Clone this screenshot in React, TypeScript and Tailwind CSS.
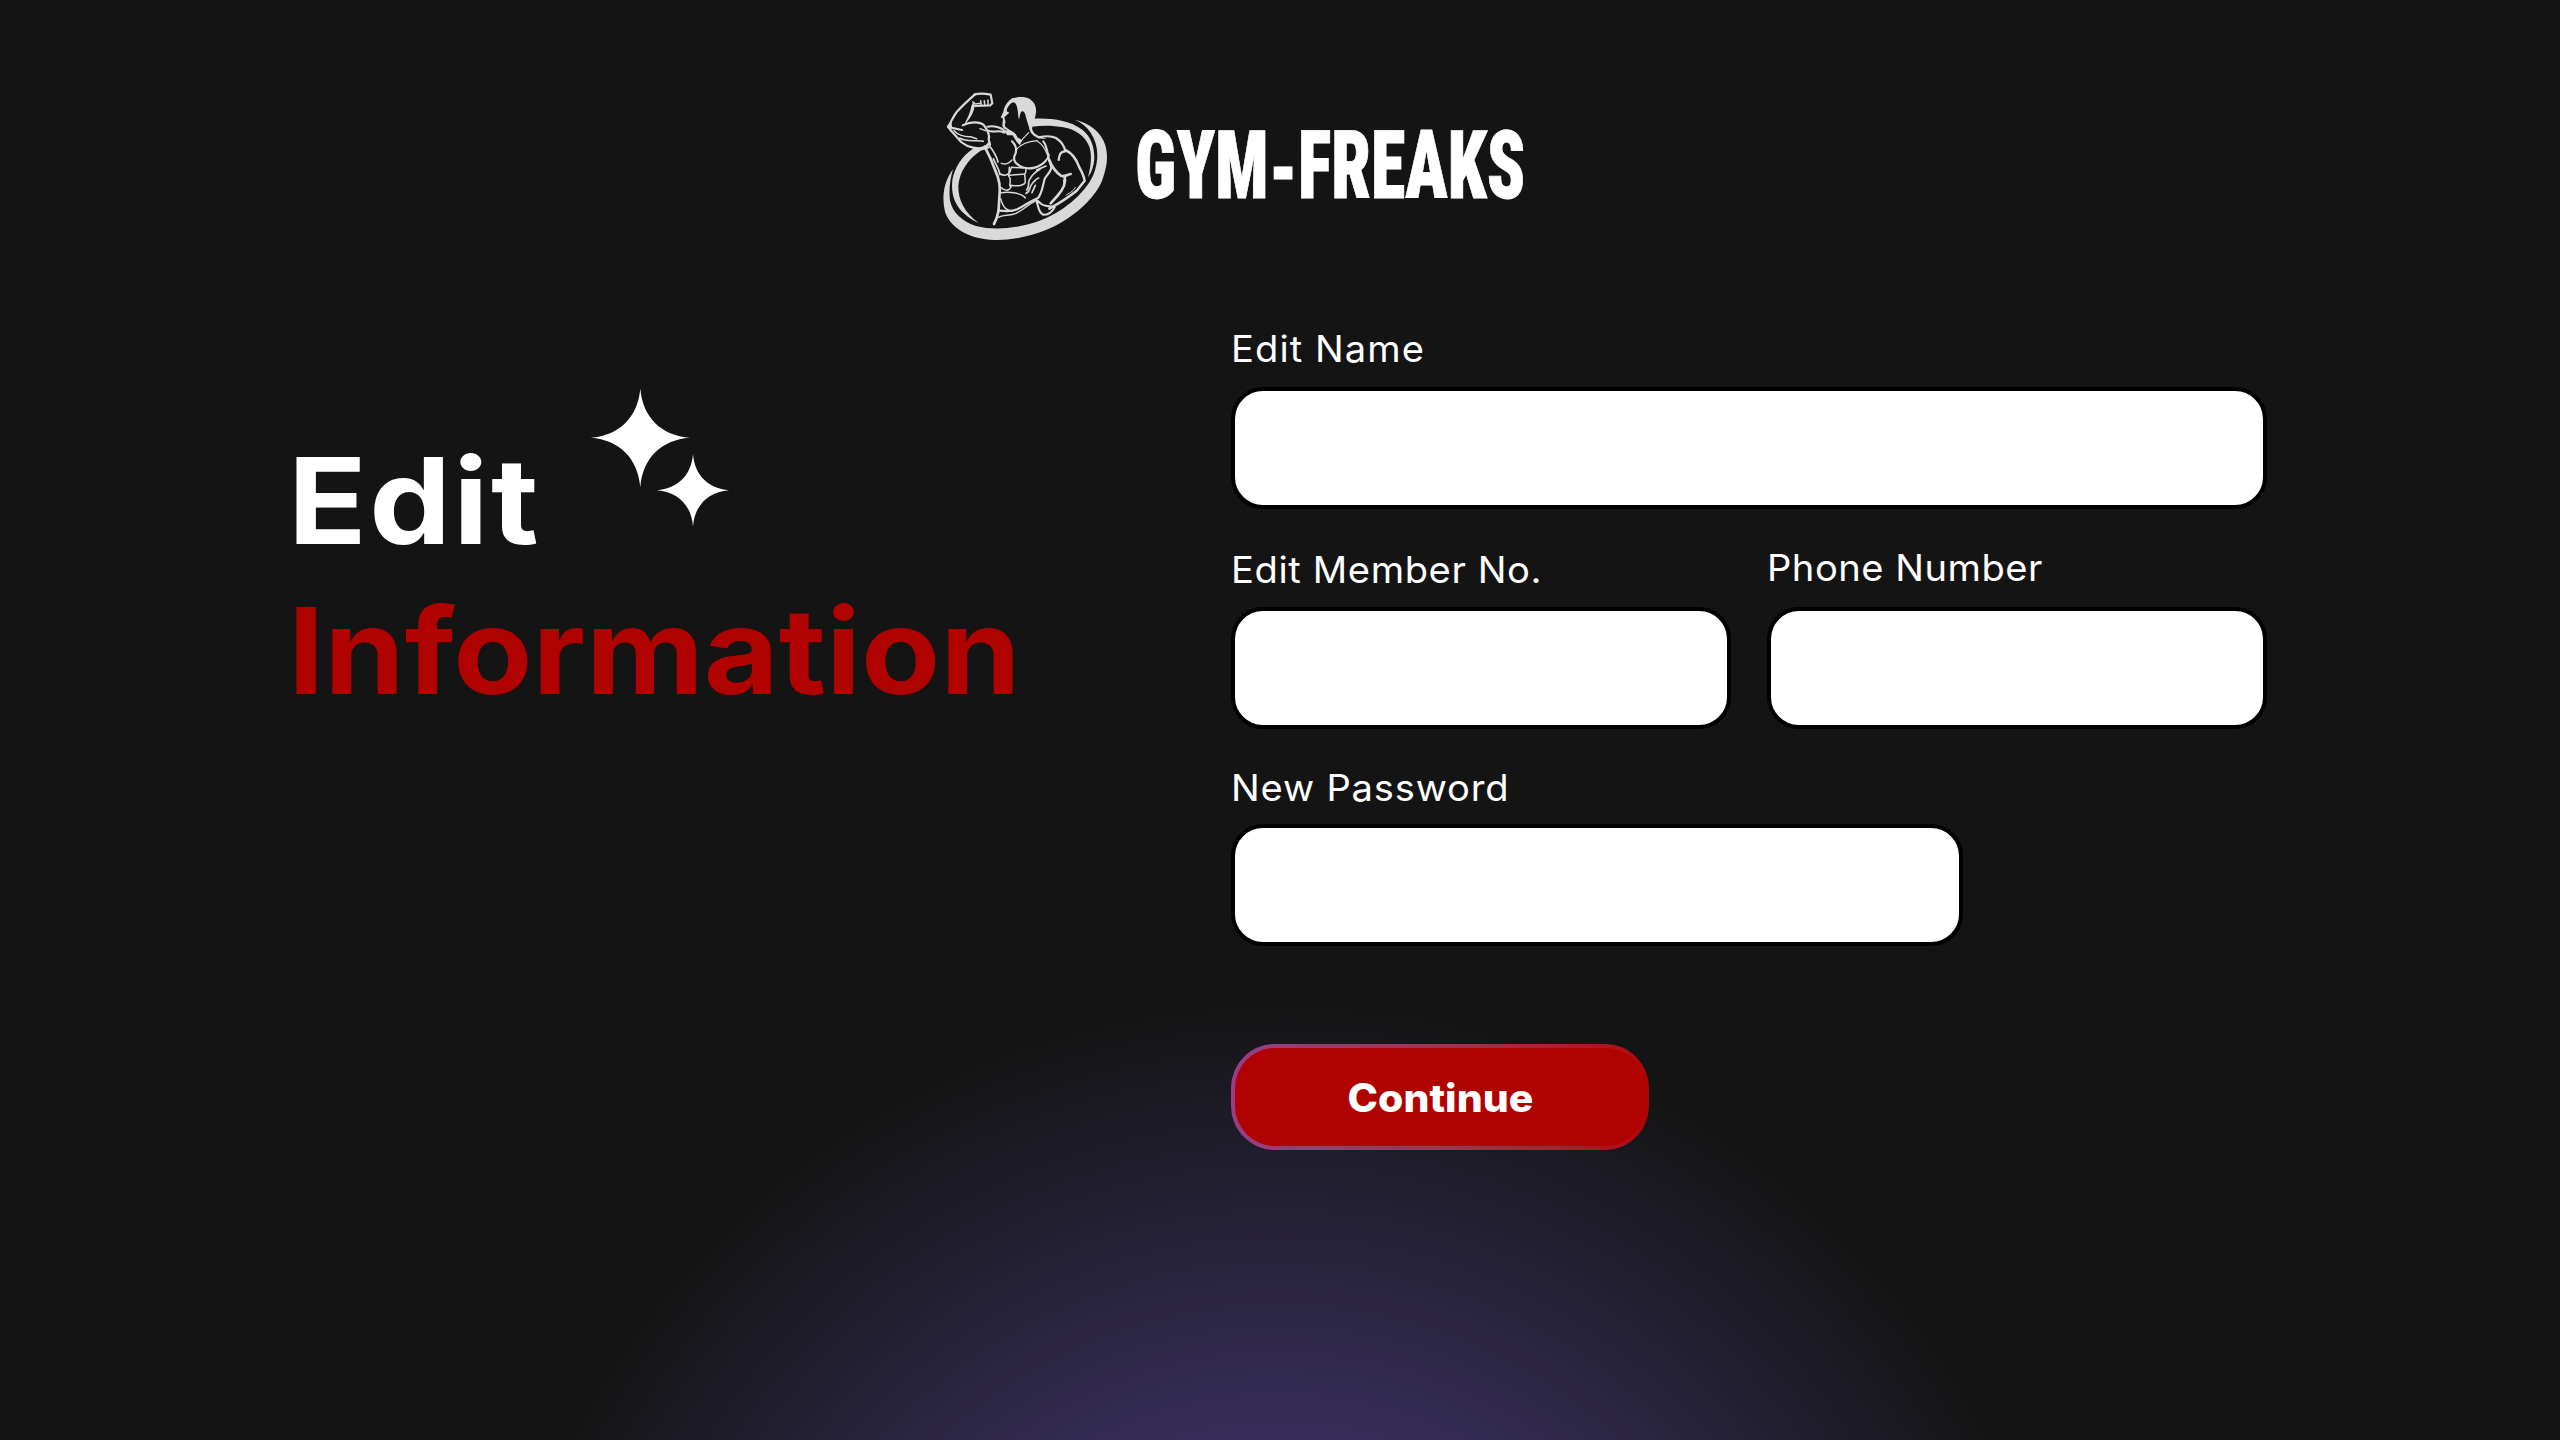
import React from "react";

function Physique() {
  return (
    <svg viewBox="0 0 570 510" className="h-[170px] w-[190px]" fill="none" stroke="#d9d9d9" strokeLinecap="round" strokeLinejoin="round">
      <g fill="#d9d9d9" stroke="none">
        <path d="M434 119C478 128 514 156 526 196C536 234 530 262 517 300C500 345 450 395 390 430C325 466 245 484 180 479C110 473 60 440 45 395C34 350 42 305 69 268C60 298 56 330 60 362C68 398 98 425 138 438C190 452 262 446 325 424C395 398 462 345 490 285C508 238 506 195 482 158C470 140 454 127 434 119Z" />
        <path d="M310 116C360 113 420 121 455 148C482 168 494 200 493 238C491 258 486 276 474 292C482 262 487 228 478 200C465 168 436 148 400 142C370 136 335 136 306 140Z" />
        <path d="M128 207C98 226 74 262 67 300C62 352 78 396 146 429C104 398 84 360 85 318C88 274 116 236 152 212L180 204L172 196Z" />
        <path d="M247 55C262 50 286 49 298 56C314 66 320 82 318 98C316 116 308 130 306 146C309 156 314 162 326 168L350 176C330 178 306 172 299 150C296 136 290 122 286 104C282 92 276 92 272 98C268 106 270 112 267 118C263 108 266 84 256 70C250 64 240 66 230 78Z" />
        <path d="M248 54C232 64 222 80 220 96L212 112L219 116L217 138L222 146L232 150L222 154L232 166L248 166L260 186L270 196L276 180L262 172C258 158 246 154 236 148L226 140C222 132 228 128 226 124L223 112L238 98L230 94C230 84 238 72 250 66Z" />
        <path d="M50 140C58 132 64 118 72 104C66 118 64 128 66 140L60 148Z" />
        <path d="M132 62C138 80 130 108 100 138C112 116 122 96 124 78Z" />
      </g>
      <g strokeWidth="6.5">
        <path d="M135 43C118 58 96 78 80 96C68 112 64 126 54 140" />
        <path d="M54 140C64 156 76 164 84 176C96 192 118 204 150 206C162 206 172 196 178 188" />
        <path d="M132 44C150 38 168 41 182 44L187 70L181 76L135 78" />
        <path d="M58 142L96 150M98 136C120 124 150 124 162 136C174 152 180 166 176 178L180 194" />
        <path d="M72 152C82 164 104 172 122 170L140 176M88 174C112 188 140 178 160 184M150 146L166 152" strokeWidth="4.5" />
        <path d="M128 66L136 72L152 70M152 62L154 76M163 62L164 76M174 60L174 76" strokeWidth="4.5" />
        <path d="M172 140C192 136 214 142 226 154M174 152C190 160 204 148 222 158" strokeWidth="6" />
        <path d="M164 200C178 226 188 250 196 272C208 296 212 322 208 352C206 382 208 402 192 432" strokeWidth="8" />
        <path d="M176 194C190 212 200 226 204 246M190 236C196 252 206 262 210 284" strokeWidth="5" />
        <path d="M246 184C256 194 262 206 256 222C246 240 256 252 278 262C300 270 330 262 346 244C352 238 356 232 356 224" />
        <path d="M258 210C272 192 292 184 322 182M268 190C278 176 288 166 296 158M322 184C336 192 346 208 352 224" strokeWidth="3.5" />
        <path d="M326 172C344 168 362 166 378 174C396 186 404 202 406 214C390 214 388 226 386 240M340 184C350 196 354 220 358 244" />
        <path d="M406 210C430 220 440 240 448 262C456 276 462 290 464 302L440 332C418 350 390 368 358 386" strokeWidth="7.5" />
        <path d="M358 240C366 262 374 274 394 288C406 290 412 284 422 282M404 290C408 306 400 328 382 348L362 370" strokeWidth="8" />
        <path d="M400 300L404 320M436 322C430 336 414 340 408 346" strokeWidth="3" />
        <path d="M318 360C326 376 324 398 340 404C356 406 366 396 374 382C362 378 344 380 334 372L322 362" />
        <path d="M360 250C372 268 352 282 344 296C338 318 336 340 324 354C300 364 282 378 262 388C244 396 226 394 208 392" />
        <path d="M314 364C292 374 282 390 258 400C240 408 218 404 206 412" strokeWidth="4.5" />
        <path d="M214 250C230 256 238 248 246 240M212 282C222 288 234 286 240 276L244 262L280 264M212 322C226 334 238 334 244 318M238 262L236 288C246 298 238 306 240 318M240 286L284 282C292 274 284 266 290 264M244 316C262 320 284 316 286 306L284 282M214 338C240 334 276 340 286 354M212 356C220 384 228 390 246 394" strokeWidth="4.5" />
        <path d="M330 268C316 276 306 284 298 300C292 314 300 318 290 330M326 294C314 298 310 306 302 318C298 328 298 336 288 340M316 316L306 338M348 258L320 270" strokeWidth="5" />
      </g>
    </svg>
  );
}

function Sparkles() {
  return (
    <svg viewBox="0 0 140 140" className="h-[140px] w-[140px]" fill="#fff">
      <path d="M50.3-.7C52.5 28 71 46.500 99.800 48.800C71 51 52.500 69.500 50.300 98.300C48 69.500 29.500 51 .8 48.800C29.500 46.500 48 28 50.300-.7Z" />
      <path d="M103 65C104.600 86 118 99.600 139 101.200C118 102.800 104.600 116.500 103 137.400C101.400 116.500 88 102.800 67 101.200C88 99.600 101.400 86 103 65Z" />
    </svg>
  );
}

const label = "block h-10 w-max origin-left scale-x-[1.03] whitespace-nowrap text-[37px] font-normal leading-10";
const field = "block h-[122px] rounded-[32px] border-4 border-black bg-white px-8 text-3xl text-black outline-none";

export default function App() {
  return (
    <main className="flex h-[1440px] w-[2560px] flex-col overflow-hidden bg-[#141414] bg-[radial-gradient(circle_801px_at_1280px_1801px,#524291_0%,#372e5a_45%,#141414_100%)] font-['Inter',sans-serif] text-white">
      <header className="flex pl-[930px] pt-20">
        <Physique />
        <h2 className="ml-[15px] mt-[31px] h-[110px] w-[400px] whitespace-nowrap font-['Roboto',sans-serif] text-[95px] font-black leading-[110px] [-webkit-text-stroke:0.8px_#fff] [font-stretch:75%]">
          <span className="inline-block origin-left scale-x-[0.738]">GYM<span className="inline-block translate-y-1">-</span>FREAKS</span>
        </h2>
      </header>
      <div className="flex">
        <section className="w-[1231px] pl-[288px] pt-[176px] text-[119px] font-bold leading-[150px]">
          <div className="flex">
            <h1 className="w-[302px] origin-left scale-x-[1.09] tracking-[2.2px]">Edit</h1>
            <div className="-mt-[37px] h-[140px] w-[140px]"><Sparkles /></div>
          </div>
          <h1 className="w-max origin-left scale-x-[1.085] text-[#b00200]">Information</h1>
        </section>
        <form className="w-[1036px] pt-[79px]">
          <label className={`${label} tracking-[1.05px]`}>Edit Name</label>
          <input className={`${field} mt-[18px] w-full`} />
          <div className="mt-[41px] flex justify-between">
            <div className="w-[500px]">
              <label className={`${label} tracking-[0.6px]`}>Edit Member No.</label>
              <input className={`${field} mt-[17px] w-full`} />
            </div>
            <div className="-mt-0.5 w-[500px]">
              <label className={`${label} tracking-[0.5px]`}>Phone Number</label>
              <input className={`${field} mt-[19px] w-full`} />
            </div>
          </div>
          <label className={`${label} mt-[39px] tracking-[0.8px]`}>New Password</label>
          <input className={`${field} mt-4 w-[732px]`} />
          <button type="button" className="mt-[98px] h-[106px] w-[418px] rounded-[44px] bg-gradient-to-r from-[#963f86] to-[#b00200] p-1">
            <span className="flex h-full items-center justify-center rounded-[40px] bg-[#b00200] pt-0.5 text-[39px] font-extrabold"><span className="scale-x-105">Continue</span></span>
          </button>
        </form>
      </div>
    </main>
  );
}
